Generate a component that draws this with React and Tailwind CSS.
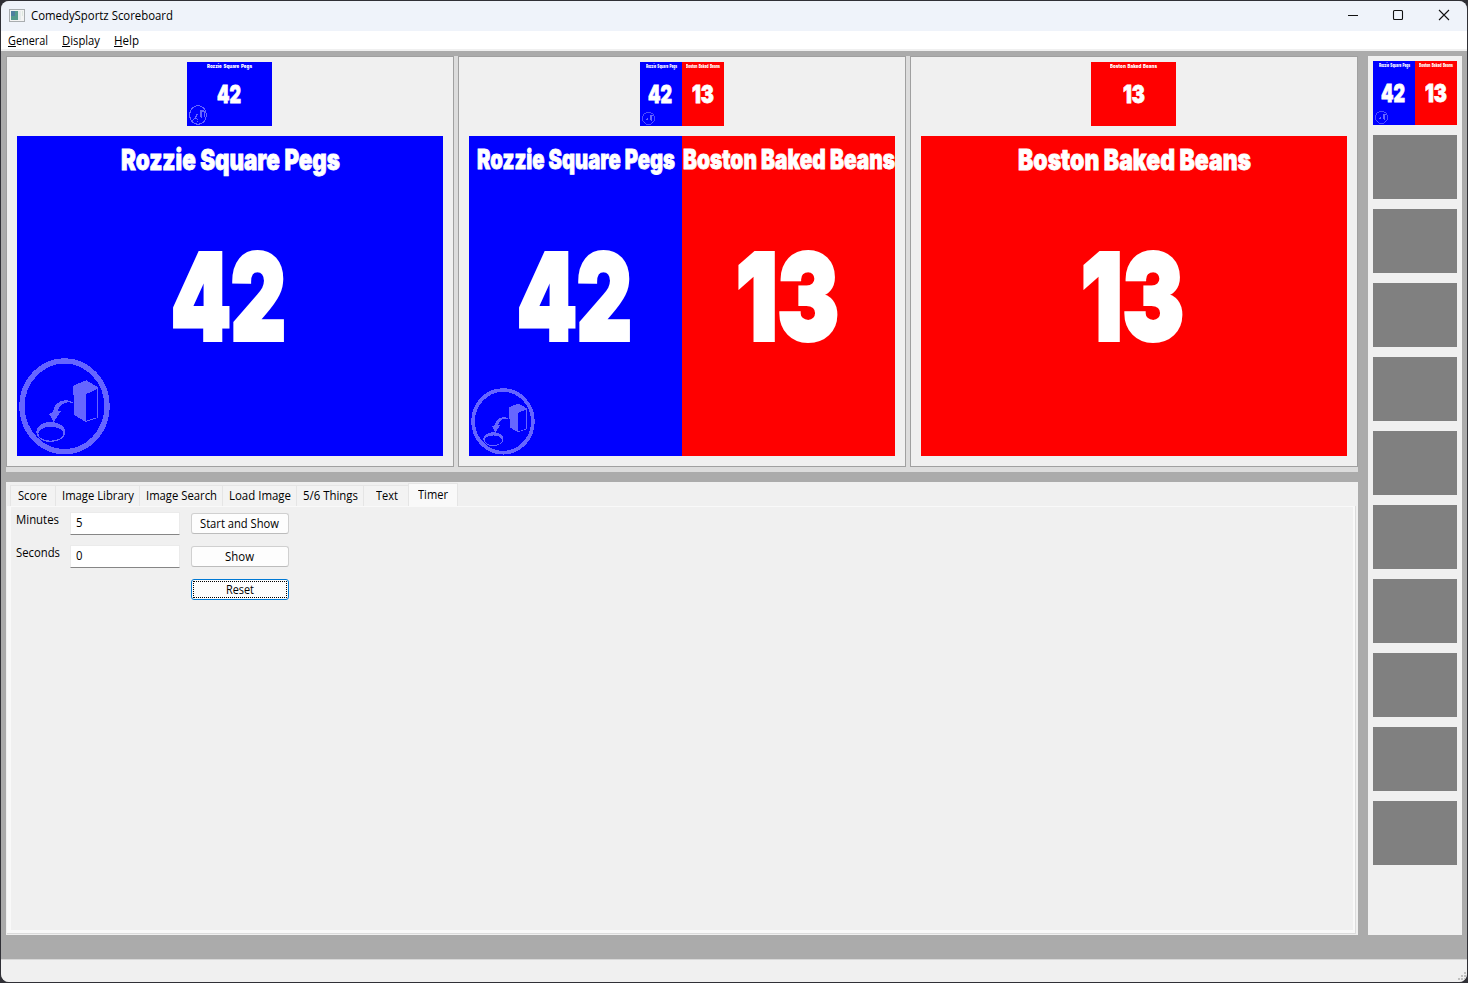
import { useLayoutEffect, useRef } from "react";

/* Text that is condensed or widened to a given width. */
function Fit({ w, className = "", children }) {
  const ref = useRef(null);
  useLayoutEffect(() => {
    const fit = () => {
      const el = ref.current;
      if (!el) return;
      el.style.transform = "none";
      el.style.transform = `scaleX(${w / el.getBoundingClientRect().width})`;
    };
    fit();
    document.fonts.ready.then(fit);
  }, [w]);
  return (
    <span className={`block ${className}`} style={{ width: w }}>
      <span ref={ref} className="inline-block origin-left whitespace-pre">{children}</span>
    </span>
  );
}

function PegLogo({ className }) {
  return (
    <svg className={className} viewBox="57 53 272 291" preserveAspectRatio="none" fill="none" shapeRendering="crispEdges">
      <ellipse cx="193" cy="198" rx="127" ry="136" stroke="#6666ff" strokeWidth="16" />
      <path d="M219 136 258 120 293 141V233L256 245 222 224Z" fill="#6666ff" />
      <path d="M258 161 291 146V231L258 241Z" fill="#0000ff" />
      <path d="M218 187C207 176 181 178 170 190C162 198 161 205 159 214L147 221 161 245 183 212 172 214C175 201 187 187 202 186Z" fill="#6666ff" />
      <ellipse cx="152" cy="275" rx="43" ry="30" fill="#6666ff" />
      <ellipse cx="152" cy="280" rx="37" ry="21" fill="#0000ff" />
    </svg>
  );
}

const FACE = "font-['Inter',sans-serif] font-black text-white";

function Side({ red, name, nameW, score, scoreW, mini, half, logo }) {
  const title = mini
    ? "h-[9px] text-[5px] leading-[9px] [word-spacing:1px]"
    : half
      ? "h-[47px] text-[26.5px] leading-[47px] [-webkit-text-stroke:0.8px_white]"
      : "h-[49px] text-[29px] leading-[48px] [-webkit-text-stroke:0.8px_white]";
  const number = mini
    ? `${red ? "" : "mr-[2px]"} h-[46px] text-[24.5px] leading-[46px] [-webkit-text-stroke:0.8px_white]`
    : half
      ? "mr-[3px] h-[228px] text-[120px] leading-[228px] [-webkit-text-stroke:4px_white]"
      : "mr-[4px] h-[224px] text-[120px] leading-[224px] [-webkit-text-stroke:4px_white]";
  return (
    <div className={`relative flex min-w-0 flex-1 flex-col items-center overflow-hidden ${FACE} ${red ? "bg-[#ff0000]" : "bg-[#0000ff]"}`}>
      <Fit w={nameW} className={title}>{name}</Fit>
      <Fit w={scoreW} className={number}>{score}</Fit>
      {logo && <PegLogo className={`absolute ${logo}`} />}
    </div>
  );
}

const A = "Rozzie Square Pegs";
const B = "Boston Baked Beans";

function MiniPair() {
  return (
    <div className="flex h-16 w-[84px] shrink-0">
      <Side mini name={A} nameW={31} score="42" scoreW={24} logo="bottom-px left-[2px] h-[13px] w-[13px]" />
      <Side mini red name={B} nameW={34} score="13" scoreW={22} />
    </div>
  );
}

function Panel({ mini, children }) {
  return (
    <div className="flex h-[411px] w-[448px] flex-col items-center gap-2.5 border border-[#a0a0a0] bg-[#f0f0f0] pt-[5px]">
      {mini}
      <div className="flex h-80 w-[426px] shrink-0">{children}</div>
    </div>
  );
}

const TABS = [
  ["Score", "w-[45px] pr-px", 29],
  ["Image Library", "w-[84px] pl-px", 72],
  ["Image Search", "w-[83px] pl-px", 71],
  ["Load Image", "w-[74px] pl-px", 62],
  ["5/6 Things", "w-[67px] pl-px", 55],
  ["Text", "w-[45px] pl-0.5", 22],
];

function Button({ w, focused, children }) {
  return (
    <button className={`flex h-[21px] w-[98px] items-center justify-center rounded-[3px] border bg-[#fdfdfd] p-px ${focused ? "border-[#0078d4]" : "border-[#d0d0d0] border-b-[#bcbcbc] pr-[3px]"}`}>
      <span className={`flex h-full w-full items-center justify-center ${focused ? "border border-dotted border-black" : ""}`}>
        <Fit w={w} className="text-left">{children}</Fit>
      </span>
    </button>
  );
}

function Field({ label, w, value }) {
  return (
    <div className="flex h-[23px]">
      <div className="w-[54px] leading-[15px]"><Fit w={w}>{label}</Fit></div>
      <div className="h-[23px] w-[110px] border border-[#ebebeb] border-b-[#868686] bg-white pl-[5px] leading-5">
        <Fit w={6.5}>{value}</Fit>
      </div>
    </div>
  );
}

export default function App() {
  return (
    <div className="h-[983px] w-[1468px] overflow-hidden bg-[#303036] p-px font-['Open_Sans','Noto_Sans',sans-serif] text-[12px] text-black">
      <div className="flex h-[981px] w-[1466px] flex-col overflow-hidden rounded-lg bg-[#ababab]">
        <header className="flex h-[30px] shrink-0 items-center bg-[#eff3fa] pl-2">
          <svg width="16" height="14" viewBox="0 0 16 14">
            <rect x=".5" y=".5" width="15" height="12" fill="#f4f4f4" stroke="#a9adb0" />
            <rect x="2" y="2" width="7" height="9" fill="#559a8c" />
            <rect x="2" y="2" width="4" height="5" fill="#4f7fa0" />
            <rect x="9" y="2" width="3" height="9" fill="#e6ebeb" />
            <rect x="13" y="2" width="1" height="5" fill="#dde8df" />
          </svg>
          <Fit w={142} className="ml-1.5">ComedySportz Scoreboard</Fit>
          <svg className="mb-0.5 ml-auto mr-[17px]" width="102" height="12" viewBox="0 0 102 12" fill="none" stroke="#111" strokeWidth="1.1">
            <path d="M0 6.5H10" shapeRendering="crispEdges" />
            <rect x="45.5" y="1.5" width="9" height="9" rx="1" />
            <path d="M91 1 101 11M101 1 91 11" />
          </svg>
        </header>
        <nav className="flex h-5 shrink-0 border-b-2 border-[#f0f0f0] bg-white pl-[7px] leading-5">
          <Fit w={40} className="mr-3.5"><u>G</u>eneral</Fit>
          <Fit w={38} className="mr-3.5"><u>D</u>isplay</Fit>
          <Fit w={25}><u>H</u>elp</Fit>
        </nav>
        <main className="flex flex-1 gap-2.5 pl-[5px] pt-[5px]">
          <div className="flex w-[1352px] flex-col gap-2.5">
            <section className="flex h-[416px] gap-1 bg-[#dcdcdc]">
              <Panel mini={
                <div className="mr-px flex h-16 w-[85px] shrink-0">
                  <Side mini name={A} nameW={45} score="42" scoreW={24} logo="bottom-px left-[2px] h-5 w-[18px]" />
                </div>
              }>
                <Side name={A} nameW={219} score="42" scoreW={115} logo="left-[2px] top-[222px] h-[97px] w-[91px]" />
              </Panel>
              <Panel mini={<MiniPair />}>
                <Side half name={A} nameW={198} score="42" scoreW={115} logo="left-[2px] top-[252px] h-[67px] w-[64px]" />
                <Side half red name={B} nameW={212} score="13" scoreW={103} />
              </Panel>
              <Panel mini={
                <div className="mr-px flex h-16 w-[85px] shrink-0">
                  <Side mini red name={B} nameW={47} score="13" scoreW={22} />
                </div>
              }>
                <Side red name={B} nameW={233} score="13" scoreW={103} />
              </Panel>
            </section>
            <section className="flex h-[453px] flex-col bg-[#f0f0f0] px-px pb-px pt-px">
              <div className="flex h-[23px] items-end pl-[3px]">
                {TABS.map(([name, cls, w]) => (
                  <div key={name} className={`flex h-[21px] items-center justify-center border-l border-t border-[#e5e5e5] bg-[#f3f3f3] ${cls}`}>
                    <Fit w={w}>{name}</Fit>
                  </div>
                ))}
                <div className="flex h-[23px] w-[50px] justify-center border-x border-t border-[#e5e5e5] bg-[#f9f9f9] leading-[22px]">
                  <Fit w={30}>Timer</Fit>
                </div>
              </div>
              <div className="mr-px h-[428px] border-b border-r border-[#dcdcdc] bg-[#f9f9f9] pb-[3px] pl-1 pr-0.5 pt-px">
                <div className="flex h-full gap-3 bg-[#f0f0f0] pl-[5px] pt-[5px]">
                  <div className="-mr-px flex flex-col gap-2.5">
                    <Field label="Minutes" w={43} value="5" />
                    <Field label="Seconds" w={44} value="0" />
                  </div>
                  <div className="flex flex-col gap-3 pt-px">
                    <Button w={79}>Start and Show</Button>
                    <Button w={29}>Show</Button>
                    <Button w={28} focused>Reset</Button>
                  </div>
                </div>
              </div>
            </section>
          </div>
          <aside className="flex h-[879px] w-[94px] flex-col gap-2.5 bg-[#f0f0f0] pl-[5px] pt-[5px]">
            <MiniPair />
            {Array.from({ length: 10 }, (_, i) => (
              <div key={i} className="h-16 w-[84px] shrink-0 bg-[#808080]" />
            ))}
          </aside>
        </main>
        <footer className="flex h-[23px] shrink-0 items-end justify-end border-t border-[#d7d7d7] bg-[#f0f0f0] pb-[2px] pr-px">
          <svg width="8" height="8" fill="#bfbfbf">
            <path d="M6 0h2v2H6zM3 3h2v2H3zM6 3h2v2H6zM0 6h2v2H0zM3 6h2v2H3zM6 6h2v2H6z" />
          </svg>
        </footer>
      </div>
    </div>
  );
}
